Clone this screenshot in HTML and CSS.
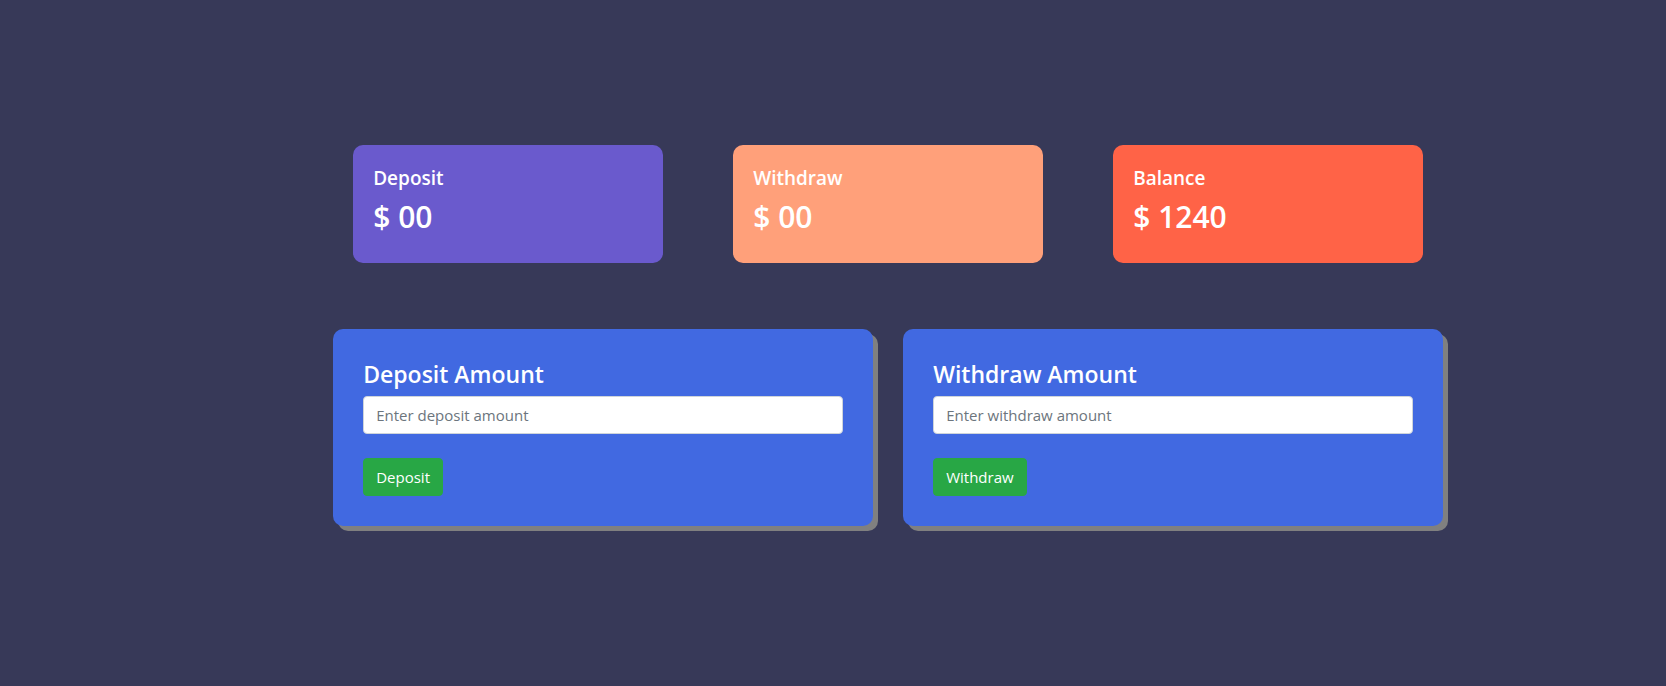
FILE: index.html
```html
<!DOCTYPE html>
<html lang="en">
<head>
  <meta charset="utf-8">
  <meta name="viewport" content="width=device-width, initial-scale=1">
  <title>Bank account</title>
  <link rel="stylesheet" href="styles.css">
</head>
<body>
  <main class="account">
    <section class="summary">
      <div class="card card-deposit">
        <h5 class="card-title">Deposit</h5>
        <h2 class="card-value">$ <span>00</span></h2>
      </div>
      <div class="card card-withdraw">
        <h5 class="card-title">Withdraw</h5>
        <h2 class="card-value">$ <span>00</span></h2>
      </div>
      <div class="card card-balance">
        <h5 class="card-title">Balance</h5>
        <h2 class="card-value">$ <span>1240</span></h2>
      </div>
    </section>
    <section class="transactions">
      <div class="panel">
        <label class="panel-title" for="deposit-amount">Deposit Amount</label>
        <input class="field" id="deposit-amount" type="text" placeholder="Enter deposit amount">
        <button class="btn" type="button">Deposit</button>
      </div>
      <div class="panel">
        <label class="panel-title" for="withdraw-amount">Withdraw Amount</label>
        <input class="field" id="withdraw-amount" type="text" placeholder="Enter withdraw amount">
        <button class="btn" type="button">Withdraw</button>
      </div>
    </section>
  </main>
</body>
</html>
```

FILE: styles.css
```css
* {
  box-sizing: border-box;
}

body {
  min-height: 100vh;
  margin: 0;
  padding: 145px 20px 40px 20%;
  background: #373958;
  color: #fff;
  font-family: "Segoe UI", "Open Sans", "Noto Sans", sans-serif;
  font-size: 15px;
  line-height: 24px;
}

.account {
  max-width: 1110px;
}

.summary {
  display: grid;
  grid-template-columns: repeat(3, 1fr);
  gap: 70px;
  padding: 0 20px;
  margin-bottom: 66px;
}

.card {
  padding: 20px;
  border-radius: 10px;
}

.card-deposit {
  background: slateblue;
}

.card-withdraw {
  background: lightsalmon;
}

.card-balance {
  background: tomato;
}

.card-title,
.card-value {
  margin: 0 0 6px;
  font-weight: 600;
}

.card-title {
  font-size: 19px;
  line-height: 26px;
}

.card-value {
  font-size: 30px;
  line-height: 40px;
}

.transactions {
  display: grid;
  grid-template-columns: repeat(2, 1fr);
  gap: 30px;
}

.panel {
  display: flex;
  flex-direction: column;
  align-items: flex-start;
  padding: 30px;
  border-radius: 10px;
  background: royalblue;
  box-shadow: 5px 5px gray;
}

.panel-title {
  margin-bottom: 6px;
  font-size: 23px;
  font-weight: 600;
  line-height: 31px;
}

.field {
  width: 100%;
  height: 38px;
  margin-bottom: 24px;
  padding: 6px 12px;
  border: 1px solid #ced4da;
  border-radius: 4px;
  background: #fff;
  color: #495057;
  font: inherit;
}

.field::placeholder {
  color: #6c757d;
  opacity: 1;
}

.btn {
  padding: 6px 12px;
  border: 1px solid #28a745;
  border-radius: 4px;
  background: #28a745;
  color: #fff;
  font: inherit;
  cursor: pointer;
}

@media (max-width: 900px) {
  body {
    padding: 40px 20px;
  }

  .summary,
  .transactions {
    grid-template-columns: 1fr;
    gap: 30px;
  }
}
```
